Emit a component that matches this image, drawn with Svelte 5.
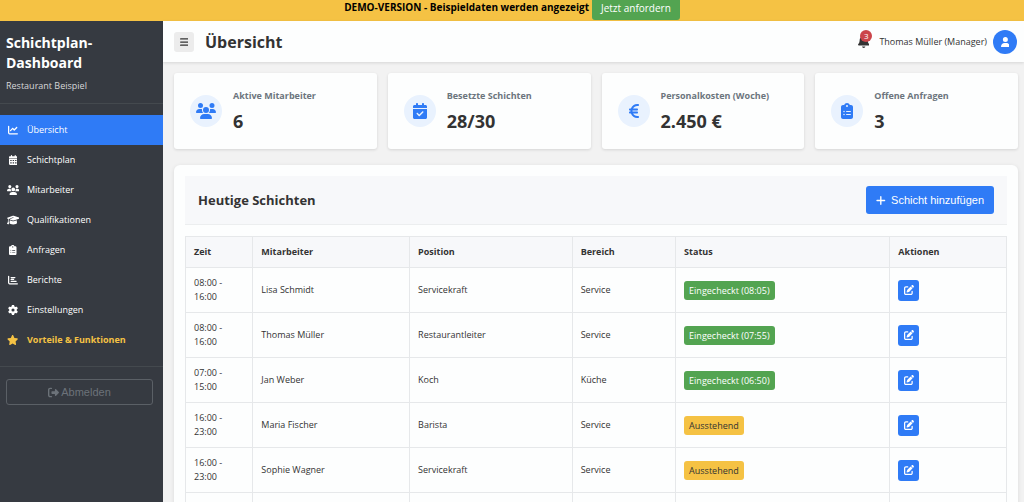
<script lang="ts">
  const calendarTop = 'M128 0c17.7 0 32 14.3 32 32V64H288V32c0-17.7 14.3-32 32-32s32 14.3 32 32V64h48c26.5 0 48 21.5 48 48v48H0V112C0 85.5 21.5 64 48 64H96V32c0-17.7 14.3-32 32-32zM0 192H448V464c0 26.5-21.5 48-48 48H48c-26.5 0-48-21.5-48-48V192z';

  const icons: Record<string, { w: number; d: string }> = {
    bars: { w: 448, d: 'M0 96C0 78.3 14.3 64 32 64H416c17.7 0 32 14.3 32 32s-14.3 32-32 32H32C14.3 128 0 113.7 0 96zM0 256c0-17.7 14.3-32 32-32H416c17.7 0 32 14.3 32 32s-14.3 32-32 32H32c-17.7 0-32-14.3-32-32zM448 416c0 17.7-14.3 32-32 32H32c-17.7 0-32-14.3-32-32s14.3-32 32-32H416c17.7 0 32 14.3 32 32z' },
    chartLine: { w: 512, d: 'M64 64c0-17.7-14.3-32-32-32S0 46.3 0 64V400c0 44.2 35.8 80 80 80H480c17.7 0 32-14.3 32-32s-14.3-32-32-32H80c-8.8 0-16-7.2-16-16V64zm406.6 86.6c12.5-12.5 12.5-32.8 0-45.3s-32.8-12.5-45.3 0L320 210.7l-57.4-57.4c-12.5-12.5-32.8-12.5-45.3 0l-112 112c-12.5 12.5-12.5 32.8 0 45.3s32.8 12.5 45.3 0L240 221.3l57.4 57.4c12.5 12.5 32.8 12.5 45.3 0l128-128z' },
    calendar: { w: 448, d: calendarTop + 'M64 256v56h72v-56zM188 256v56h72v-56zM312 256v56h72v-56zM64 376v56h72v-56zM188 376v56h72v-56zM312 376v56h72v-56z' },
    calendarCheck: { w: 448, d: calendarTop + 'M329 305c9.4-9.4 9.4-24.6 0-33.9s-24.6-9.4-33.9 0l-95 95-47-47c-9.4-9.4-24.6-9.4-33.9 0s-9.4 24.6 0 33.9l64 64c9.4 9.4 24.6 9.4 33.9 0L329 305z' },
    users: { w: 640, d: 'M144 0a80 80 0 1 1 0 160A80 80 0 1 1 144 0zM512 0a80 80 0 1 1 0 160A80 80 0 1 1 512 0zM0 298.7C0 239.8 47.8 192 106.7 192h42.7c15.9 0 31 3.5 44.6 9.7c-1.3 7.2-1.9 14.7-1.9 22.3c0 38.2 16.8 72.5 43.3 96c-.2 0-.4 0-.7 0H21.3C9.6 320 0 310.4 0 298.7zM405.3 320c-.2 0-.4 0-.7 0c26.6-23.5 43.3-57.8 43.3-96c0-7.6-.7-15-1.9-22.3c13.6-6.3 28.7-9.7 44.6-9.7h42.7C592.2 192 640 239.8 640 298.7c0 11.8-9.6 21.3-21.3 21.3H405.3zM224 224a96 96 0 1 1 192 0 96 96 0 1 1 -192 0zM128 485.3C128 411.7 187.7 352 261.3 352H378.7C452.3 352 512 411.7 512 485.3c0 14.7-11.9 26.7-26.7 26.7H154.7c-14.7 0-26.7-11.9-26.7-26.7z' },
    cap: { w: 640, d: 'M320 32c-8.1 0-16.1 1.4-23.7 4.1L15.8 137.4C6.3 140.9 0 149.9 0 160s6.3 19.1 15.8 22.6l57.9 20.9C57.3 229.3 48 259.8 48 291.9v28.1c0 28.4-10.8 57.7-22.3 80.8c-6.5 13-13.9 25.8-22.5 37.6C0 442.7-.9 448.3 .9 453.4s6 8.9 11.2 10.2l64 16c4.2 1.1 8.7 .3 12.4-2s6.3-6.1 7.1-10.4c8.6-42.8 4.3-81.2-2.1-108.7C90.3 344.3 86 329.8 80 316.5V291.9c0-30.2 10.2-58.7 27.9-81.5c12.9-15.5 29.6-28 49.2-35.7l157-61.7c8.2-3.2 17.5 .8 20.7 9s-.8 17.5-9 20.7l-157 61.7c-12.4 4.9-23.3 12.4-32.2 21.6l159.6 57.6c7.6 2.7 15.6 4.1 23.7 4.1s16.1-1.4 23.7-4.1L624.2 182.6c9.5-3.4 15.8-12.5 15.8-22.6s-6.3-19.1-15.8-22.6L343.7 36.1C336.1 33.4 328.1 32 320 32zM128 408c0 35.3 86 72 192 72s192-36.7 192-72L496.7 262.6 354.5 314c-11.1 4-22.8 6-34.5 6s-23.5-2-34.5-6L143.3 262.6 128 408z' },
    clipboard: { w: 384, d: 'M192 0c-41.8 0-77.4 26.7-90.5 64H64C28.7 64 0 92.7 0 128V448c0 35.3 28.7 64 64 64H320c35.3 0 64-28.7 64-64V128c0-35.3-28.7-64-64-64H282.5C269.4 26.7 233.8 0 192 0zm0 64a32 32 0 1 1 0 64 32 32 0 1 1 0-64zM72 272a24 24 0 1 1 48 0 24 24 0 1 1 -48 0zm104-16H304c8.8 0 16 7.2 16 16s-7.2 16-16 16H176c-8.8 0-16-7.2-16-16s7.2-16 16-16zM72 368a24 24 0 1 1 48 0 24 24 0 1 1 -48 0zm88 0c0-8.8 7.2-16 16-16H304c8.8 0 16 7.2 16 16s-7.2 16-16 16H176c-8.8 0-16-7.2-16-16z' },
    chartBar: { w: 512, d: 'M32 32c17.7 0 32 14.3 32 32V400c0 8.8 7.2 16 16 16H480c17.7 0 32 14.3 32 32s-14.3 32-32 32H80c-44.2 0-80-35.8-80-80V64C0 46.3 14.3 32 32 32zm96 96c0-17.7 14.3-32 32-32l192 0c17.7 0 32 14.3 32 32s-14.3 32-32 32H160c-17.7 0-32-14.3-32-32zm32 64H288c17.7 0 32 14.3 32 32s-14.3 32-32 32H160c-17.7 0-32-14.3-32-32s14.3-32 32-32zm0 96H416c17.7 0 32 14.3 32 32s-14.3 32-32 32H160c-17.7 0-32-14.3-32-32s14.3-32 32-32z' },
    gear: { w: 512, d: 'M495.9 166.6c3.2 8.7 .5 18.4-6.4 24.6l-43.3 39.4c1.1 8.3 1.7 16.8 1.7 25.4s-.6 17.1-1.7 25.4l43.3 39.4c6.9 6.2 9.6 15.9 6.4 24.6c-4.4 11.9-9.7 23.3-15.8 34.3l-4.7 8.1c-6.6 11-14 21.4-22.1 31.2c-5.9 7.2-15.7 9.6-24.5 6.8l-55.7-17.7c-13.4 10.3-28.2 18.9-44 25.4l-12.5 57.1c-2 9.1-9 16.3-18.2 17.8c-13.8 2.3-28 3.5-42.5 3.5s-28.7-1.2-42.5-3.5c-9.2-1.5-16.2-8.7-18.2-17.8l-12.5-57.1c-15.8-6.5-30.6-15.1-44-25.4L83.1 425.9c-8.8 2.8-18.6 .3-24.5-6.8c-8.1-9.8-15.5-20.2-22.1-31.2l-4.7-8.1c-6.1-11-11.4-22.4-15.8-34.3c-3.2-8.7-.5-18.4 6.4-24.6l43.3-39.4C64.6 273.1 64 264.6 64 256s.6-17.1 1.7-25.4L22.4 191.2c-6.9-6.2-9.6-15.9-6.4-24.6c4.4-11.9 9.7-23.3 15.8-34.3l4.7-8.1c6.6-11 14-21.4 22.1-31.2c5.9-7.2 15.7-9.6 24.5-6.8l55.7 17.7c13.4-10.3 28.2-18.9 44-25.4l12.5-57.1c2-9.1 9-16.3 18.2-17.8C227.3 1.2 241.5 0 256 0s28.7 1.2 42.5 3.5c9.2 1.5 16.2 8.7 18.2 17.8l12.5 57.1c15.8 6.5 30.6 15.1 44 25.4l55.7-17.7c8.8-2.8 18.6-.3 24.5 6.8c8.1 9.8 15.5 20.2 22.1 31.2l4.7 8.1c6.1 11 11.4 22.4 15.8 34.3zM256 336a80 80 0 1 0 0-160 80 80 0 1 0 0 160z' },
    star: { w: 576, d: 'M316.9 18C311.6 7 300.4 0 288.1 0s-23.4 7-28.8 18L195 150.3 51.4 171.5c-12 1.8-22 10.2-25.7 21.7s-.7 24.2 7.9 32.7L137.8 329 113.2 474.7c-2 12 3 24.2 12.9 31.3s23 8 33.8 2.3l128.3-68.5 128.3 68.5c10.8 5.7 23.9 4.9 33.8-2.3s14.9-19.3 12.9-31.3L438.5 329 542.7 225.9c8.6-8.5 11.7-21.2 7.9-32.7s-13.7-19.9-25.7-21.7L381.2 150.3 316.9 18z' },
    logout: { w: 512, d: 'M377.9 105.9L500.7 228.7c7.2 7.2 11.3 17.1 11.3 27.3s-4.1 20.1-11.3 27.3L377.9 406.1c-6.4 6.4-15 9.9-24 9.9c-18.7 0-33.9-15.2-33.9-33.9l0-62.1-128 0c-17.7 0-32-14.3-32-32l0-64c0-17.7 14.3-32 32-32l128 0 0-62.1c0-18.7 15.2-33.9 33.9-33.9c9 0 17.6 3.6 24 9.9zM160 96L96 96c-17.7 0-32 14.3-32 32l0 256c0 17.7 14.3 32 32 32l64 0c17.7 0 32 14.3 32 32s-14.3 32-32 32l-64 0c-53 0-96-43-96-96L0 128C0 75 43 32 96 32l64 0c17.7 0 32 14.3 32 32s-14.3 32-32 32z' },
    bell: { w: 448, d: 'M224 0c-17.7 0-32 14.3-32 32V51.2C119 66 64 130.6 64 208v18.8c0 47-17.3 92.4-48.5 127.6l-7.4 8.3c-8.4 9.4-10.4 22.9-5.3 34.4S19.4 416 32 416H416c12.6 0 24-7.4 29.2-18.9s3.1-25-5.3-34.4l-7.4-8.3C401.3 319.2 384 273.9 384 226.8V208c0-77.4-55-142-128-156.8V32c0-17.7-14.3-32-32-32zm45.3 493.3c12-12 18.7-28.3 18.7-45.3H160c0 17 6.7 33.3 18.7 45.3s28.3 18.7 45.3 18.7s33.3-6.7 45.3-18.7z' },
    user: { w: 448, d: 'M224 256A128 128 0 1 0 224 0a128 128 0 1 0 0 256zm-45.7 48C79.8 304 0 383.8 0 482.3C0 498.7 13.3 512 29.7 512H418.3c16.4 0 29.7-13.3 29.7-29.7C448 383.8 368.2 304 269.7 304H178.3z' },
    euro: { w: 320, d: 'M48.1 240c-.1 2.7-.1 5.3-.1 8v16c0 2.7 0 5.3 .1 8H32c-17.7 0-32 14.3-32 32s14.3 32 32 32H60.3C89.9 419.9 170 480 264 480h24c17.7 0 32-14.3 32-32s-14.3-32-32-32H264c-57.9 0-108.2-32.4-133.9-80H256c17.7 0 32-14.3 32-32s-14.3-32-32-32H112.2c-.1-2.6-.2-5.3-.2-8V248c0-2.7 .1-5.4 .2-8H256c17.7 0 32-14.3 32-32s-14.3-32-32-32H130.1c25.7-47.6 76-80 133.9-80h24c17.7 0 32-14.3 32-32s-14.3-32-32-32H264C170 32 89.9 92.1 60.3 176H32c-17.7 0-32 14.3-32 32s14.3 32 32 32H48.1z' },
    plus: { w: 448, d: 'M256 80c0-17.7-14.3-32-32-32s-32 14.3-32 32V224H48c-17.7 0-32 14.3-32 32s14.3 32 32 32H192V432c0 17.7 14.3 32 32 32s32-14.3 32-32V288H400c17.7 0 32-14.3 32-32s-14.3-32-32-32H256V80z' },
    edit: { w: 512, d: 'M471.6 21.7c-21.9-21.9-57.3-21.9-79.2 0L362.3 51.7l97.9 97.9 30.1-30.1c21.9-21.9 21.9-57.3 0-79.2L471.6 21.7zm-299.2 220c-6.1 6.1-10.8 13.6-13.5 21.9l-29.6 88.8c-2.9 8.6-.6 18.1 5.8 24.6s15.9 8.7 24.6 5.8l88.8-29.6c8.2-2.7 15.7-7.4 21.9-13.5L437.7 172.3 339.7 74.3 172.4 241.7zM96 64C43 64 0 107 0 160V416c0 53 43 96 96 96H352c53 0 96-43 96-96V320c0-17.7-14.3-32-32-32s-32 14.3-32 32v96c0 17.7-14.3 32-32 32H96c-17.7 0-32-14.3-32-32V160c0-17.7 14.3-32 32-32h96c17.7 0 32-14.3 32-32s-14.3-32-32-32H96z' },
  };

  const navItems = [
    { label: 'Übersicht', icon: 'chartLine' },
    { label: 'Schichtplan', icon: 'calendar' },
    { label: 'Mitarbeiter', icon: 'users' },
    { label: 'Qualifikationen', icon: 'cap' },
    { label: 'Anfragen', icon: 'clipboard' },
    { label: 'Berichte', icon: 'chartBar' },
    { label: 'Einstellungen', icon: 'gear' },
    { label: 'Vorteile & Funktionen', icon: 'star', highlight: true },
  ];

  const stats = [
    { label: 'Aktive Mitarbeiter', value: '6', icon: 'users' },
    { label: 'Besetzte Schichten', value: '28/30', icon: 'calendarCheck' },
    { label: 'Personalkosten (Woche)', value: '2.450 €', icon: 'euro' },
    { label: 'Offene Anfragen', value: '3', icon: 'clipboard' },
  ];

  const shifts = [
    { from: '08:00', to: '16:00', name: 'Lisa Schmidt', position: 'Servicekraft', area: 'Service', checkin: '08:05' },
    { from: '08:00', to: '16:00', name: 'Thomas Müller', position: 'Restaurantleiter', area: 'Service', checkin: '07:55' },
    { from: '07:00', to: '15:00', name: 'Jan Weber', position: 'Koch', area: 'Küche', checkin: '06:50' },
    { from: '16:00', to: '23:00', name: 'Maria Fischer', position: 'Barista', area: 'Service', checkin: '' },
    { from: '16:00', to: '23:00', name: 'Sophie Wagner', position: 'Servicekraft', area: 'Service', checkin: '' },
  ];

  let active = $state('Übersicht');
</script>

{#snippet icon(name: string, size: number)}
  <svg
    viewBox="0 0 {icons[name].w} 512"
    width={(icons[name].w / 512) * size}
    height={size}
    fill="currentColor"
    fill-rule={name === 'calendar' || name === 'calendarCheck' ? 'evenodd' : 'nonzero'}
    aria-hidden="true"
  >
    <path d={icons[name].d} />
  </svg>
{/snippet}

<div class="app">
  <div class="demo-banner">
    <strong>DEMO-VERSION - Beispieldaten werden angezeigt</strong>
    <a class="demo-link" href="#anfordern">Jetzt anfordern</a>
  </div>

  <div class="layout">
    <aside class="sidebar">
      <div class="sidebar-header">
        <h2>Schichtplan-Dashboard</h2>
        <p>Restaurant Beispiel</p>
      </div>
      <nav>
        {#each navItems as item}
          <a
            href="#{item.icon}"
            class="nav-link"
            class:active={active === item.label}
            class:highlight={item.highlight}
            onclick={() => (active = item.label)}
          >
            <span class="nav-icon">{@render icon(item.icon, 10)}</span>
            {item.label}
          </a>
        {/each}
      </nav>
      <div class="sidebar-footer">
        <button class="logout">{@render icon('logout', 11)}Abmelden</button>
      </div>
    </aside>

    <div class="main">
      <header class="topbar">
        <button class="menu-toggle" aria-label="Menü">{@render icon('bars', 10)}</button>
        <h1>Übersicht</h1>
        <div class="user-area">
          <button class="bell" aria-label="Benachrichtigungen">
            {@render icon('bell', 13)}
            <span class="bell-count">3</span>
          </button>
          <span>Thomas Müller (Manager)</span>
          <span class="avatar">{@render icon('user', 10)}</span>
        </div>
      </header>

      <main class="content">
        <section class="stats">
          {#each stats as stat}
            <div class="stat-card">
              <div class="stat-icon">{@render icon(stat.icon, 16)}</div>
              <div>
                <h3>{stat.label}</h3>
                <p>{stat.value}</p>
              </div>
            </div>
          {/each}
        </section>

        <section class="panel">
          <div class="panel-header">
            <h2>Heutige Schichten</h2>
            <button class="add-button">{@render icon('plus', 11)}Schicht hinzufügen</button>
          </div>
          <table>
            <thead>
              <tr>
                <th class="col-time">Zeit</th>
                <th class="col-name">Mitarbeiter</th>
                <th class="col-position">Position</th>
                <th class="col-area">Bereich</th>
                <th class="col-status">Status</th>
                <th>Aktionen</th>
              </tr>
            </thead>
            <tbody>
              {#each shifts as shift}
                <tr>
                  <td>{shift.from} -<br />{shift.to}</td>
                  <td>{shift.name}</td>
                  <td>{shift.position}</td>
                  <td>{shift.area}</td>
                  <td>
                    {#if shift.checkin}
                      <span class="badge success">Eingecheckt ({shift.checkin})</span>
                    {:else}
                      <span class="badge warning">Ausstehend</span>
                    {/if}
                  </td>
                  <td>
                    <button class="edit" aria-label="{shift.name} bearbeiten">{@render icon('edit', 10)}</button>
                  </td>
                </tr>
              {/each}
              <tr>
                <td></td><td></td><td></td><td></td><td></td><td></td>
              </tr>
            </tbody>
          </table>
        </section>
      </main>
    </div>
  </div>
</div>

<style>
  :global(body) {
    margin: 0;
  }

  .app {
    display: flex;
    flex-direction: column;
    height: 100vh;
    overflow: hidden;
    background: #f2f2f2;
    color: #333;
    font-family: "Open Sans", Tahoma, sans-serif;
    font-size: 9px;
    line-height: 14px;
  }

  .app * {
    box-sizing: border-box;
  }

  h1, h2, h3, p {
    margin: 0;
  }

  svg {
    display: block;
    flex: none;
  }

  button {
    display: flex;
    align-items: center;
    justify-content: center;
    padding: 0;
    border: none;
    cursor: pointer;
  }

  .demo-banner {
    display: flex;
    flex: none;
    justify-content: center;
    gap: 3px;
    padding-bottom: 1px;
    background: #f5c244;
    color: #000;
  }

  .demo-banner strong {
    font-size: 10px;
  }

  .demo-link {
    padding: 0 9px 3px;
    border-radius: 0 0 3px 3px;
    background: #53a451;
    color: #fff;
    font-size: 10px;
    line-height: 17px;
    text-decoration: none;
  }

  .layout {
    display: flex;
    flex: 1;
    min-height: 0;
  }

  .sidebar {
    flex: none;
    width: 163px;
    background: #363a41;
    color: #fff;
  }

  .sidebar-header {
    padding: 12px 6px 10px;
    border-bottom: 1px solid #44494e;
  }

  .sidebar-header h2 {
    font-size: 14px;
    line-height: 20px;
  }

  .sidebar-header p {
    margin-top: 6px;
    color: #d7d8d9;
  }

  nav {
    padding: 11px 0;
    border-bottom: 1px solid #44494e;
  }

  .nav-link {
    display: flex;
    align-items: center;
    gap: 7px;
    height: 30px;
    padding: 0 6px;
    color: #fff;
    text-decoration: none;
  }

  .nav-link.active {
    background: #2f7bf6;
  }

  .nav-link.highlight {
    color: #f5c244;
    font-weight: bold;
  }

  .nav-icon {
    display: flex;
    justify-content: center;
    width: 14px;
  }

  .sidebar-footer {
    padding: 12px 10px 12px 6px;
  }

  .logout {
    gap: 2px;
    width: 100%;
    height: 26px;
    border: 1px solid #5b6066;
    border-radius: 3px;
    background: transparent;
    color: #6c7279;
    font: 11px "Liberation Sans", Arial, sans-serif;
  }

  .main {
    display: flex;
    flex: 1;
    flex-direction: column;
    min-width: 0;
  }

  .topbar {
    display: flex;
    flex: none;
    align-items: center;
    height: 41px;
    padding: 0 7px 0 11px;
    background: #fdfefe;
    box-shadow: 0 1px 3px rgba(0, 0, 0, 0.12);
  }

  .menu-toggle {
    width: 20px;
    height: 20px;
    border-radius: 3px;
    background: #ececec;
    color: #333;
  }

  h1 {
    margin-left: 11px;
    font-size: 16px;
    line-height: 20px;
  }

  .user-area {
    display: flex;
    align-items: center;
    margin-left: auto;
  }

  .bell {
    position: relative;
    margin-right: 10px;
    background: transparent;
    color: #333;
  }

  .bell-count {
    position: absolute;
    top: -5px;
    right: -3px;
    width: 12px;
    height: 12px;
    border-radius: 50%;
    background: #cb444a;
    color: #fff;
    font: 8px/12px "Open Sans", Tahoma, sans-serif;
    text-align: center;
  }

  .avatar {
    display: flex;
    align-items: center;
    justify-content: center;
    width: 24px;
    height: 24px;
    margin-left: 6px;
    border-radius: 50%;
    background: #2f7bf6;
    color: #fff;
  }

  .content {
    flex: 1;
    padding: 11px 6px 11px 11px;
    overflow-y: auto;
    scrollbar-width: none;
  }

  .stats {
    display: grid;
    grid-template-columns: repeat(4, 1fr);
    gap: 11px;
    margin-bottom: 16px;
  }

  .stat-card {
    display: flex;
    align-items: center;
    gap: 11px;
    height: 76px;
    padding: 0 16px;
    border-radius: 3px;
    background: #fdfefe;
    box-shadow: 0 1px 3px rgba(0, 0, 0, 0.12);
  }

  .stat-icon {
    display: flex;
    align-items: center;
    justify-content: center;
    width: 32px;
    height: 32px;
    border-radius: 50%;
    background: #e9f2fe;
    color: #2f7bf6;
  }

  h3 {
    color: #6c757d;
    font-size: 9px;
    line-height: 14px;
  }

  .stat-card p {
    margin-top: 6px;
    font-size: 18px;
    font-weight: bold;
    line-height: 24px;
  }

  .panel {
    padding: 11px;
    border-radius: 6px;
    background: #fdfefe;
    box-shadow: 0 1px 4px rgba(0, 0, 0, 0.1);
  }

  .panel-header {
    display: flex;
    align-items: center;
    justify-content: space-between;
    height: 49px;
    margin-bottom: 11px;
    padding: 0 13px;
    border-bottom: 1px solid #eceeef;
    background: #f7f8fa;
  }

  .panel-header h2 {
    font-size: 13px;
    line-height: 18px;
  }

  .add-button {
    gap: 5px;
    height: 28px;
    padding: 0 10px;
    border-radius: 3px;
    background: #2f7bf6;
    color: #fff;
    font: 11px "Liberation Sans", Arial, sans-serif;
  }

  table {
    width: 100%;
    border-collapse: collapse;
    table-layout: fixed;
  }

  th, td {
    padding: 0 8px;
    border: 1px solid #e6e8ea;
    text-align: left;
    vertical-align: middle;
  }

  th {
    height: 31px;
    background: #f7f8fa;
  }

  td {
    height: 45px;
  }

  .col-time {
    width: 8.2%;
  }

  .col-name {
    width: 19.1%;
  }

  .col-position {
    width: 19.8%;
  }

  .col-area {
    width: 12.6%;
  }

  .col-status {
    width: 26.1%;
  }

  .badge {
    display: block;
    width: fit-content;
    padding: 0 5px;
    border-radius: 3px;
    line-height: 19px;
  }

  .success {
    background: #53a451;
    color: #fff;
  }

  .warning {
    background: #f5c244;
    color: #333;
  }

  .edit {
    width: 21px;
    height: 21px;
    border-radius: 3px;
    background: #2f7bf6;
    color: #fff;
  }
</style>
